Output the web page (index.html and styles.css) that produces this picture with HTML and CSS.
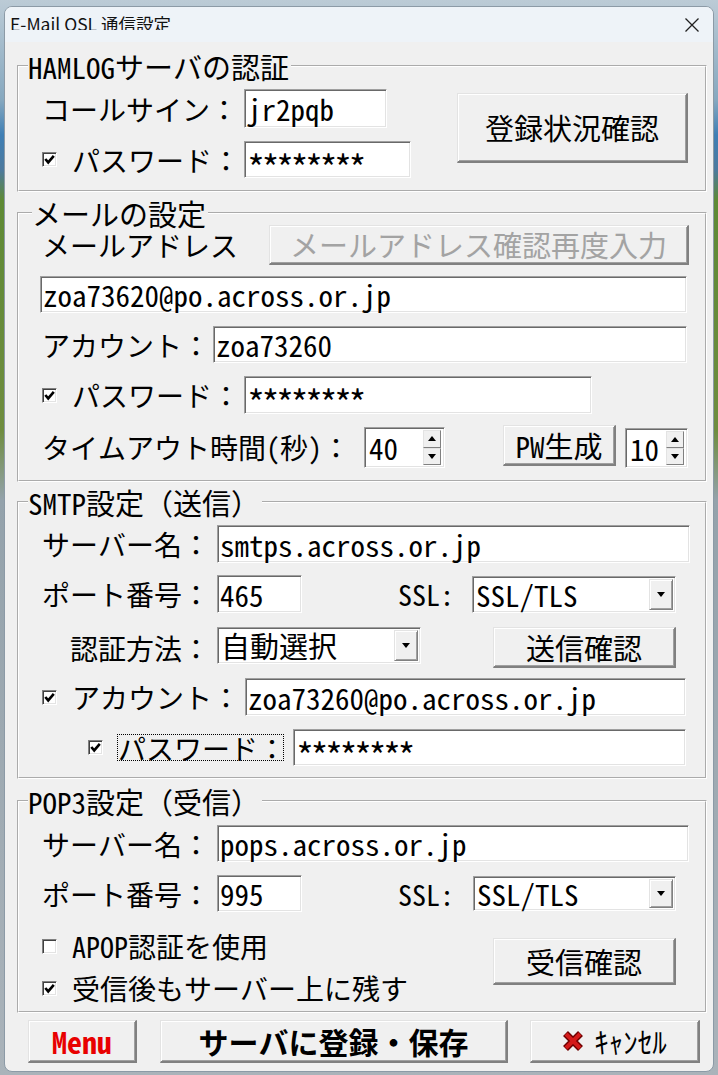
FILE: index.html
```html
<!DOCTYPE html>
<html lang="ja">
<head>
<meta charset="utf-8">
<title>E-Mail QSL 通信設定</title>
<link rel="stylesheet" href="styles.css">
</head>
<body>
<div class="window">
  <div class="titlebar">
    <div class="title"><span class="title-text">E-Mail QSL 通信設定</span></div>
    <svg class="close" width="16" height="16" viewBox="0 0 16 16"><path d="M1.5 1.5L14.5 14.5M14.5 1.5L1.5 14.5" stroke="#202020" stroke-width="1.3" fill="none"/></svg>
  </div>
  <div class="content">
    <fieldset class="group g1">
      <legend>HAMLOGサーバの認証</legend>
      <div class="gbody g1-body">
        <div class="col">
          <div class="row h39">
            <span class="label w202">コールサイン：</span>
            <div class="field w143 h39">jr2pqb</div>
          </div>
          <div class="row h37 mt13">
            <span class="cb"><svg width="11" height="11" viewBox="0 0 11 11"><path d="M1.3 5L4.2 8.4L9.8 1.8" stroke="#000" stroke-width="2.6" fill="none"/></svg></span>
            <span class="label ml15 w172">パスワード：</span>
            <div class="field w167 h37"><span class="pw">********</span></div>
          </div>
        </div>
        <button class="btn status">登録状況確認</button>
      </div>
    </fieldset>

    <fieldset class="group g2">
      <legend>メールの設定</legend>
      <div class="gbody g2-body">
        <div class="row h40 mtm3">
          <span class="label w227">メールアドレス</span>
          <button class="btn disabled w420 h40">メールアドレス確認再度入力</button>
        </div>
        <div class="row h37 mt11">
          <div class="field mlm2 w647 h37">zoa73620@po.across.or.jp</div>
        </div>
        <div class="row h37 mt13">
          <span class="label w171">アカウント：</span>
          <div class="field w474 h37">zoa73260</div>
        </div>
        <div class="row h38 mt13">
          <span class="cb"><svg width="11" height="11" viewBox="0 0 11 11"><path d="M1.3 5L4.2 8.4L9.8 1.8" stroke="#000" stroke-width="2.6" fill="none"/></svg></span>
          <span class="label ml15 w172">パスワード：</span>
          <div class="field w348 h38"><span class="pw">********</span></div>
        </div>
        <div class="row top h43 mt11">
          <span class="label w322 self-center">タイムアウト時間(秒)：</span>
          <div class="field spin w81 h41 mt2"><span class="val">40</span><span class="spinbtns"><span class="sb up"></span><span class="sb down"></span></span></div>
          <button class="btn ml58 w113 h41">PW生成</button>
          <div class="field spin ml9 w63 h40 mt3"><span class="val">10</span><span class="spinbtns"><span class="sb up"></span><span class="sb down"></span></span></div>
        </div>
      </div>
    </fieldset>

    <fieldset class="group g3">
      <legend>SMTP設定（送信）</legend>
      <div class="gbody g3-body">
        <div class="row h38">
          <span class="label w175">サーバー名：</span>
          <div class="field w473 h38">smtps.across.or.jp</div>
        </div>
        <div class="row h38 mt12">
          <span class="label w175">ポート番号：</span>
          <div class="field w85 h38">465</div>
          <span class="label ml96 w74">SSL:</span>
          <div class="field select w204 h37"><span class="val">SSL/TLS</span><span class="drop"></span></div>
        </div>
        <div class="row top h41 mt14">
          <span class="label ml28 w147 self-center">認証方法：</span>
          <div class="field select w204 h37"><span class="val">自動選択</span><span class="drop"></span></div>
          <button class="btn ml72 w183 h41">送信確認</button>
        </div>
        <div class="row h38 mt10">
          <span class="cb"><svg width="11" height="11" viewBox="0 0 11 11"><path d="M1.3 5L4.2 8.4L9.8 1.8" stroke="#000" stroke-width="2.6" fill="none"/></svg></span>
          <span class="label ml15 w173">アカウント：</span>
          <div class="field w441 h38">zoa73260@po.across.or.jp</div>
        </div>
        <div class="row h37 mt13">
          <span class="cb ml46"><svg width="11" height="11" viewBox="0 0 11 11"><path d="M1.3 5L4.2 8.4L9.8 1.8" stroke="#000" stroke-width="2.6" fill="none"/></svg></span>
          <span class="label focus ml14 w167">パスワード：</span>
          <div class="field ml9 w393 h37"><span class="pw">********</span></div>
        </div>
      </div>
    </fieldset>

    <fieldset class="group g4">
      <legend>POP3設定（受信）</legend>
      <div class="gbody g4-body">
        <div class="row h37">
          <span class="label w175">サーバー名：</span>
          <div class="field w472 h37">pops.across.or.jp</div>
        </div>
        <div class="row h37 mt13">
          <span class="label w175">ポート番号：</span>
          <div class="field w85 h37">995</div>
          <span class="label ml96 w75">SSL:</span>
          <div class="field select w203 h35"><span class="val">SSL/TLS</span><span class="drop"></span></div>
        </div>
        <div class="row top mt18">
          <div class="col w451">
            <div class="row h32">
              <span class="cb"></span>
              <span class="label ml15">APOP認証を使用</span>
            </div>
            <div class="row h32 mt10">
              <span class="cb"><svg width="11" height="11" viewBox="0 0 11 11"><path d="M1.3 5L4.2 8.4L9.8 1.8" stroke="#000" stroke-width="2.6" fill="none"/></svg></span>
              <span class="label ml15">受信後もサーバー上に残す</span>
            </div>
          </div>
          <button class="btn w183 h47 mt8">受信確認</button>
        </div>
      </div>
    </fieldset>

    <div class="footer">
      <button class="btn fbtn menu">Menu</button>
      <button class="btn fbtn save">サーバに登録・保存</button>
      <button class="btn fbtn cancel"><svg width="22" height="22" viewBox="0 0 22 22"><path d="M3.5 3.5L18.5 18.5M18.5 3.5L3.5 18.5" stroke="#6e0000" stroke-width="7"/><path d="M4 4L18 18M18 4L4 18" stroke="#d41a1a" stroke-width="4"/></svg><span class="cancel-text">ｷｬﾝｾﾙ</span></button>
    </div>
  </div>
</div>
</body>
</html>
```

FILE: styles.css
```css
* { box-sizing: border-box; }
html, body { margin: 0; padding: 0; }
body {
  width: 718px;
  height: 1075px;
  overflow: hidden;
  background: linear-gradient(180deg, #bccbd6 0px, #86a8bf 100px, #3f7fb5 135px, #4d7a9e 170px, #5e8a35 200px, #6f8d3f 430px, #94a2ab 500px, #aab3ba 1075px);
  font-family: "Noto Sans Mono CJK JP", "Noto Sans CJK JP", "DejaVu Sans Mono", monospace;
  color: #000;
}

.window {
  margin: 6px 0 0 4px;
  width: 710px;
  height: 1066px;
  background: #f0f0f0;
  border: 1px solid #8c9aa6;
  border-radius: 8px;
  overflow: hidden;
  display: flex;
  flex-direction: column;
}

.titlebar {
  height: 35px;
  flex: none;
  background: #eef3f8;
  display: flex;
  align-items: center;
  justify-content: space-between;
  padding: 0 13px 0 5px;
}
.title { height: 35px; padding-top: 8px; }
.title-text {
  display: block;
  height: 15px;
  overflow: hidden;
  font-family: "Noto Sans CJK JP", "Liberation Sans", sans-serif;
  font-size: 17.5px;
  line-height: 17px;
  white-space: nowrap;
  color: #111;
}
.close { display: block; }

.content {
  flex: 1;
  padding: 0 6px 0 12px;
  display: flex;
  flex-direction: column;
}

.group {
  margin: 0;
  padding: 0;
  border: 2px groove #fff;
  min-width: 0;
}
.group legend {
  padding: 2px 2px 0 0;
  margin-left: 9px;
  font-size: 29px;
  line-height: 26px;
  height: 30px;
  white-space: nowrap;
}
.g1 { margin-top: 9px; }
.g2 { margin-top: 6px; }
.g2 legend { margin-left: 13px; }
.g3 { margin-top: 5px; }
.g4 { margin-top: 7px; }

.gbody { padding-left: 23px; }
.g1-body { display: flex; align-items: flex-start; padding-top: 8px; padding-bottom: 12px; }
.g2-body { padding-bottom: 12px; }
.g3-body { padding-top: 8px; padding-bottom: 11px; }
.g4-body { padding-top: 9px; padding-bottom: 7px; }

.col { display: flex; flex-direction: column; }
.row { display: flex; align-items: center; }
.row.top { align-items: flex-start; }
.self-center { align-self: center; }

.label {
  font-size: 28px;
  line-height: 1;
  white-space: nowrap;
  flex: none;
}
.label.focus {
  height: 27px;
  border: 1px dotted #000;
  display: flex;
  align-items: center;
}

.field {
  flex: none;
  background: #fff;
  border: 1px solid;
  border-color: #a0a0a0 #fff #fff #a0a0a0;
  box-shadow: inset 1px 1px 0 #696969, inset -1px -1px 0 #e3e3e3;
  font-size: 29px;
  line-height: 1;
  padding-left: 2px;
  display: flex;
  align-items: center;
  white-space: nowrap;
}
.pw {
  font-size: 36px;
  letter-spacing: -3.5px;
  line-height: 20px;
  height: 20px;
  margin-top: 12px;
}

.select { justify-content: space-between; align-items: stretch; padding: 2px 2px 2px 3px; }
.select .val, .spin .val { align-self: center; }
.drop {
  width: 24px;
  background: #f0f0f0;
  border-style: solid;
  border-width: 1px;
  border-color: #e3e3e3 #808080 #808080 #e3e3e3;
  box-shadow: inset 1px 1px 0 #fff, inset -1px -1px 0 #a0a0a0;
  display: flex;
  align-items: center;
  justify-content: center;
}
.drop::before {
  content: "";
  border-left: 4.5px solid transparent;
  border-right: 4.5px solid transparent;
  border-top: 5px solid #000;
}

.spin { justify-content: space-between; align-items: stretch; padding: 2px 3px 2px 4px; }
.spinbtns { display: flex; flex-direction: column; width: 18px; }
.sb {
  flex: 1;
  background: #f0f0f0;
  border: 1px solid;
  border-color: #e3e3e3 #808080 #808080 #e3e3e3;
  display: flex;
  align-items: center;
  justify-content: center;
}
.sb.up::before {
  content: "";
  border-left: 4.5px solid transparent;
  border-right: 4.5px solid transparent;
  border-bottom: 5px solid #000;
}
.sb.down::before {
  content: "";
  border-left: 4.5px solid transparent;
  border-right: 4.5px solid transparent;
  border-top: 5px solid #000;
}

.cb {
  flex: none;
  width: 15px;
  height: 15px;
  background: #fff;
  border: 1px solid;
  border-color: #808080 #fff #fff #808080;
  box-shadow: inset 1px 1px 0 #404040, inset -1px -1px 0 #e3e3e3;
  display: flex;
  align-items: center;
  justify-content: center;
}
.cb svg { display: block; }

.btn {
  flex: none;
  font-family: inherit;
  font-size: 29px;
  line-height: 1;
  color: #000;
  background: #f0f0f0;
  margin: 0;
  padding: 0;
  border-style: solid;
  border-width: 1px 2px 2px 1px;
  border-color: #e3e3e3 #808080 #808080 #e3e3e3;
  box-shadow: inset 1px 1px 0 #fff, inset -1px -1px 0 #a0a0a0;
  display: flex;
  align-items: center;
  justify-content: center;
  white-space: nowrap;
}
.btn.disabled { color: #a3a3a3; }
.status { width: 231px; height: 70px; margin-left: 46px; margin-top: 4px; }

.footer { display: flex; margin-top: 7px; padding-left: 11px; }
.fbtn { height: 43px; }
.menu { width: 109px; color: #e80000; font-weight: bold; font-size: 30px; }
.save { width: 348px; margin-left: 23px; font-weight: bold; font-size: 30px; }
.cancel { width: 170px; margin-left: 22px; gap: 10px; }
.cancel svg { display: block; }
.cancel-text { font-size: 29px; }

/* sizes */
.h32 { height: 32px; } .h35 { height: 35px; } .h37 { height: 37px; } .h38 { height: 38px; }
.h39 { height: 39px; } .h40 { height: 40px; } .h41 { height: 41px; } .h43 { height: 43px; } .h47 { height: 47px; }
.w63 { width: 63px; } .w74 { width: 74px; } .w75 { width: 75px; } .w81 { width: 81px; } .w85 { width: 85px; }
.w113 { width: 113px; } .w143 { width: 143px; } .w147 { width: 147px; } .w167 { width: 167px; }
.w171 { width: 171px; } .w172 { width: 172px; } .w173 { width: 173px; } .w175 { width: 175px; }
.w183 { width: 183px; } .w202 { width: 202px; } .w203 { width: 203px; } .w204 { width: 204px; }
.w227 { width: 227px; } .w322 { width: 322px; } .w348 { width: 348px; } .w393 { width: 393px; }
.w420 { width: 420px; } .w441 { width: 441px; } .w451 { width: 451px; } .w472 { width: 472px; }
.w473 { width: 473px; } .w474 { width: 474px; } .w647 { width: 647px; }
.mt2 { margin-top: 2px; } .mt3 { margin-top: 3px; } .mt8 { margin-top: 8px; } .mt10 { margin-top: 10px; }
.mt11 { margin-top: 11px; } .mt12 { margin-top: 12px; } .mt13 { margin-top: 13px; } .mt14 { margin-top: 14px; }
.mt18 { margin-top: 18px; } .mtm3 { margin-top: -3px; }
.ml9 { margin-left: 9px; } .ml14 { margin-left: 14px; } .ml15 { margin-left: 15px; } .ml28 { margin-left: 28px; }
.ml46 { margin-left: 46px; } .ml58 { margin-left: 58px; } .ml72 { margin-left: 72px; } .ml96 { margin-left: 96px; }
.mlm2 { margin-left: -2px; }
```
